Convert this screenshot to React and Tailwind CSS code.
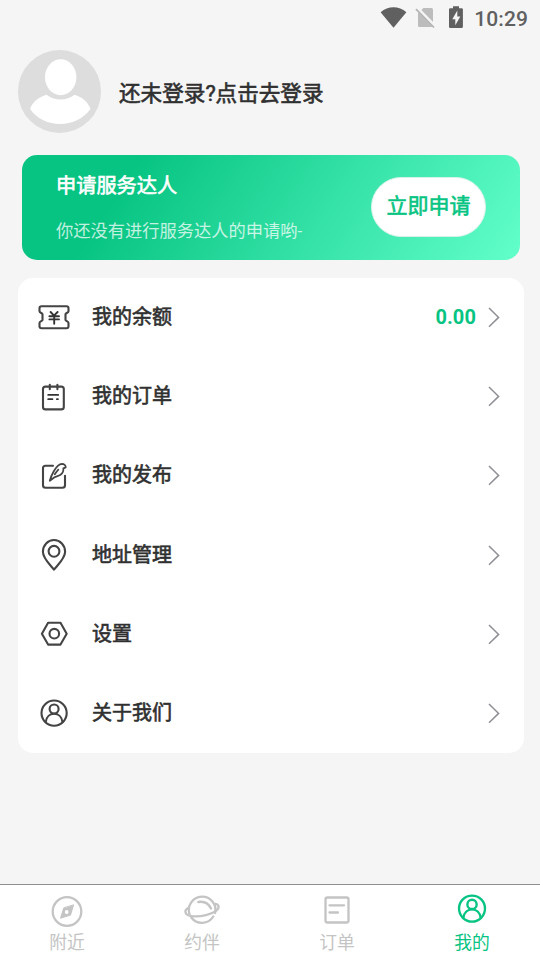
const bold = '[-webkit-text-stroke:0.6px_currentColor]';

function PersonInRing() {
  return (
    <>
      <circle cx="14" cy="14" r="12.6" />
      <circle cx="14" cy="9.9" r="4.5" />
      <path d="M5.6 23c.7-5.4 4.200-8.300 8.400-8.300s7.700 2.900 8.400 8.300" />
    </>
  );
}

function RowIcon({ box, children }) {
  return (
    <svg className="h-[37px] w-9 shrink-0" viewBox={box} fill="none" stroke="#444" strokeWidth="2.100" strokeLinejoin="round" strokeLinecap="round">
      {children}
    </svg>
  );
}

const rows = [
  {
    label: '我的余额',
    value: '0.00',
    icon: (
      <RowIcon box="36 299 36 37">
        <path d="M41.500 306.200h25q2 0 2 2v3c0 1.500-3 2-3 3v5.800c0 1 3 1.500 3 3v3.200q0 2-2 2h-25q-2 0-2-2v-3.200c0-1.500 3-2 3-3v-5.800c0-1-3-1.500-3-3v-3q0-2 2-2z" />
        <path d="M50.600 312l3.400 3.700 3.600-3.700M49.400 316.200h9.600M49.400 319.400h9.600M54.200 316v7.700" stroke="#333" strokeWidth="1.900" />
      </RowIcon>
    ),
  },
  {
    label: '我的订单',
    icon: (
      <RowIcon box="36 378 36 37">
        <rect x="43" y="386.600" width="20.800" height="22.800" rx="2.500" />
        <path d="M49.800 384.800v4.500M57.400 384.800v4.500" />
        <path d="M48.200 394.900h10M48.200 399.200h4.200M56.900 399.200h1" stroke="#333" strokeWidth="1.800" />
      </RowIcon>
    ),
  },
  {
    label: '我的发布',
    icon: (
      <RowIcon box="36 457 36 37">
        <path d="M53 465.700h-7.500q-2.500 0-2.500 2.500v17q0 2.500 2.500 2.500h17q2.500 0 2.500-2.500v-9.500" />
        <path d="M49.800 480.700c.8-3 2.200-6.300 4-9.400 2-3.500 4.900-7.300 8.200-7.400 2.100 0 3.800 1.500 3.700 3.400l-2.300 1c.2 2.200-1 5-2.900 6.500-1.800 1.300-4 1.500-6 2.400zM54.800 474.300c1.100-1.700 2.200-3.400 3.500-4.700" strokeWidth="1.800" />
      </RowIcon>
    ),
  },
  {
    label: '地址管理',
    tall: true,
    icon: (
      <RowIcon box="36 537 36 37">
        <path d="M54 569.700c-3.500-4.700-11.100-11.200-11.100-18a11.100 11.700 0 0 1 22.200 0c0 6.800-7.600 13.300-11.100 18z" />
        <circle cx="54" cy="551.300" r="5.400" />
      </RowIcon>
    ),
  },
  {
    label: '设置',
    icon: (
      <RowIcon box="36 616 36 37">
        <path d="M48.100 622.800h12.400l6.200 10.900-6.200 10.900H48.100l-6.200-10.900z" />
        <circle cx="54.300" cy="633.700" r="4.800" />
      </RowIcon>
    ),
  },
  {
    label: '关于我们',
    icon: (
      <RowIcon box="36 695 36 37">
        <g transform="translate(40.100 699.100)">
          <PersonInRing />
        </g>
      </RowIcon>
    ),
  },
];

function StatusBar() {
  return (
    <header className="flex h-9 items-center justify-end pr-3 text-[#606060]">
      <svg className="h-9 w-[94px]" viewBox="380 0 94 36">
        <path d="M380.600 12.200c7.500-6.600 18.300-6.600 25.800 0L393.500 27.800z" fill="#606060" />
        <path d="M423.400 8h8.100q1.500 0 1.500 1.500v16q0 1.500-1.500 1.500h-12q-1.500 0-1.500-1.500V13.200z" fill="#bcbcbc" />
        <path d="M416.800 8.200l18.600 19" stroke="#f5f5f5" strokeWidth="3.800" />
        <path d="M416 9.200l18 18.300" stroke="#b3b3b3" strokeWidth="1.700" />
        <path d="M453 6.200h6v2h2.600q1.300 0 1.300 1.300v17.200q0 1.300-1.300 1.300h-11.300q-1.300 0-1.300-1.300V9.500q0-1.300 1.300-1.300h2.700z" fill="#606060" />
        <path d="M457.300 10.500l-5 8.700h3v6l5-8.800h-3z" fill="#f5f5f5" />
      </svg>
      <span className="mt-0.5 text-[21px] font-medium leading-9 tracking-[0.1px]">10:29</span>
    </header>
  );
}

function Profile() {
  return (
    <section className="flex h-[119px] items-start pl-[18px] pt-[14px]">
      <svg className="size-[83px]" viewBox="0 0 83 83">
        <circle cx="41.500" cy="41.500" r="41.500" fill="#ddd" />
        <ellipse cx="42.700" cy="27.200" rx="15.700" ry="18" fill="#fff" />
        <path d="M28.500 44.700c7.500 6.300 20.500 6.300 28 0C64 47 70 51.500 72.500 59 58 79 26 79 12 59c2.500-7.500 9-12 16.500-14.300z" fill="#fff" />
      </svg>
      <h1 className={`ml-[18px] mt-7 text-[21.600px] leading-8 text-[#303030] ${bold}`}>还未登录?点击去登录</h1>
    </section>
  );
}

function Banner() {
  return (
    <section className="ml-[22px] flex h-[105px] w-[498px] items-start justify-between rounded-[15px] bg-[linear-gradient(123deg,#07c482_21%,#62ffcb)] pl-[34px] pr-[34px] text-white">
      <div>
        <h2 className={`mt-4 text-[20.200px] leading-[30px] ${bold}`}>申请服务达人</h2>
        <p className="mt-[17px] text-[17.250px] leading-[26px] text-white/75">你还没有进行服务达人的申请哟-</p>
      </div>
      <button className={`mt-[22px] h-[60px] w-[115px] rounded-full border border-[#d7f3e8] bg-white pb-px text-[21px] text-[#07c482] ${bold}`}>立即申请</button>
    </section>
  );
}

function Menu() {
  return (
    <ul className="ml-[18px] mt-[18px] w-[506px] rounded-[15px] bg-white">
      {rows.map((row) => (
        <li key={row.label} className={`flex h-[79px] items-center pl-[18px] pr-[23px] ${row.tall ? 'mt-px' : ''}`}>
          {row.icon}
          <span className={`mb-0.5 ml-5 text-[20px] leading-[30px] text-[#303030] ${bold}`}>{row.label}</span>
          <span className="mb-0.5 ml-auto text-[20px] font-bold leading-[30px] tracking-[0.100px] text-[#07c482]">{row.value}</span>
          <svg className="ml-3 h-[37px] w-[13px]" viewBox="0 0 13 37" fill="none" stroke="#8f8f96" strokeWidth="1.500">
            <path d="M1 9l9.600 9.400L1 27.800" />
          </svg>
        </li>
      ))}
    </ul>
  );
}

const tabs = [
  {
    label: '附近',
    icon: (
      <>
        <circle cx="67" cy="911.500" r="14.300" />
        <path d="M73.500 905.200l-3 9.900-10 3.100 3.200-10z" fill="#c4c4c4" stroke="#c4c4c4" strokeWidth="1" />
        <circle cx="66.700" cy="912" r="1.900" fill="#fff" stroke="none" />
      </>
    ),
    box: '47 889 40 40',
  },
  {
    label: '约伴',
    icon: (
      <>
        <path d="M189.500 914a13.300 13.300 0 1 1 25.600-1M191.300 917.500a13.300 13.300 0 0 0 22-1" />
        <path d="M188.500 907.800c-2.700 1.500-3.600 3.400-2.800 5.300 1.700 3.700 11.300 4.100 20.300 2 8.300-2 13.400-5.600 12.500-9-.3-1.200-1.400-2-3-2.300" />
        <path d="M198.300 902c5.500-1 10.300 1.700 12.700 6.500" />
      </>
    ),
    box: '182 889 40 40',
  },
  {
    label: '订单',
    icon: (
      <>
        <rect x="325.500" y="897.500" width="23" height="25" rx="2" />
        <path d="M329.500 905.300h14.500M329.500 912.500h8.500" />
      </>
    ),
    box: '317 889 40 40',
  },
  {
    label: '我的',
    active: true,
    icon: (
      <g transform="translate(457.600 894.200) scale(1.030)">
        <PersonInRing />
      </g>
    ),
    box: '452 889 40 40',
  },
];

function TabBar() {
  return (
    <nav className="mt-auto grid h-[76px] grid-cols-4 border-t border-[#8e8e8e] bg-white">
      {tabs.map((tab) => (
        <a key={tab.label} className={`flex flex-col items-center pr-px pt-1 ${tab.active ? 'text-[#07c482]' : 'text-[#c4c4c4]'}`}>
          <svg className="size-10" viewBox={tab.box} fill="none" stroke="currentColor" strokeWidth="2.300" strokeLinecap="round" strokeLinejoin="round">
            {tab.icon}
          </svg>
          <span className="mt-px text-[17.800px] leading-[26px]">{tab.label}</span>
        </a>
      ))}
    </nav>
  );
}

export default function App() {
  return (
    <main className="flex h-[960px] w-[540px] flex-col overflow-hidden bg-[#f5f5f5] font-[Roboto,'Noto_Sans_CJK_SC',sans-serif]">
      <StatusBar />
      <Profile />
      <Banner />
      <Menu />
      <TabBar />
    </main>
  );
}
